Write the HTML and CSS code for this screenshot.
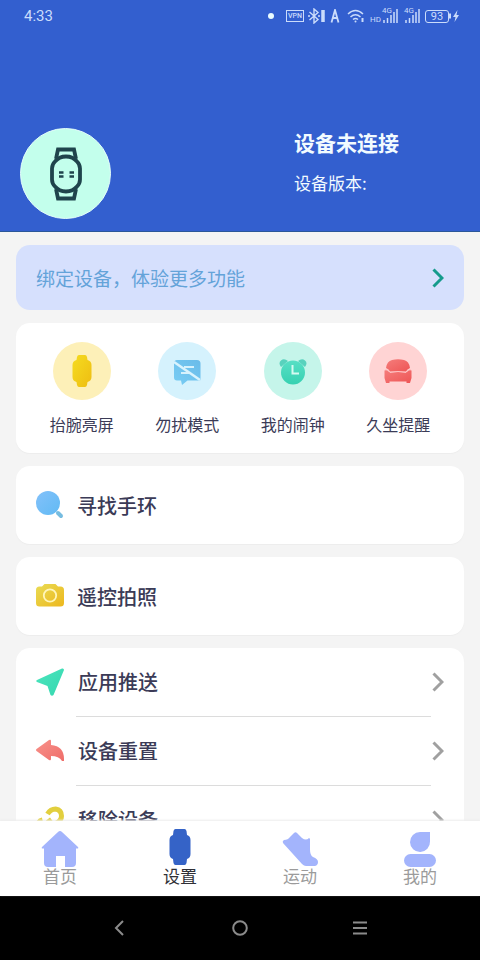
FILE: index.html
```html
<!DOCTYPE html>
<html lang="zh-CN">
<head>
<meta charset="utf-8">
<meta name="viewport" content="width=device-width, initial-scale=1">
<title>设置</title>
<link rel="stylesheet" href="styles.css">
</head>
<body>
<header class="hero">
  <div class="status">
    <time class="clock">4:33</time>
    <span class="dot"></span>
    <span class="vpn">VPN</span>
    <svg class="st-bt" width="18" height="16" viewBox="0 0 18 16" fill="none" stroke="currentColor" stroke-width="1.4"><path d="M1.500 4l8.500 7.500L6 15V1l4 3.500L1.500 12M0 8h2M10 8h2"/><path d="M15 2v12" stroke-width="3.500"/></svg>
    <svg class="st-a" width="10" height="14" viewBox="0 0 10 14" fill="none" stroke="currentColor" stroke-width="1.800"><path d="M1.500 13.500L5 1l3.500 12.500M3 9h4"/></svg>
    <svg class="st-wifi" width="18" height="14" viewBox="0 0 18 14" fill="none" stroke="currentColor" stroke-width="1.500"><path d="M1 5q7.500-7 15 0M3.500 8q5-4.500 10 0M6 10.500q2.500-2 5 0"/><circle cx="8.500" cy="12.500" r="1" fill="currentColor" stroke="none"/><path d="M15.500 9v4" stroke-width="2"/></svg>
    <span class="hd">HD</span>
    <span class="signal"><span class="gen">4G</span><svg width="16" height="16" viewBox="0 0 16 16" fill="none" stroke="currentColor" stroke-width="1.500"><path d="M2 15v-3M5.500 15v-5M9 15V7M12 15V4M15 15V1"/></svg></span>
    <span class="signal"><span class="gen">4G</span><svg width="16" height="16" viewBox="0 0 16 16" fill="none" stroke="currentColor" stroke-width="1.500"><path d="M2 15v-3M5.500 15v-5M9 15V7M12 15V4M15 15V1"/></svg></span>
    <span class="battery">93</span>
    <svg class="st-bolt" width="11" height="12" viewBox="0 0 11 12" fill="currentColor"><path d="M0 3.500h2v5H0zM8.500 0L4 7h2.500L5.500 12 10 5H7.500z"/></svg>
  </div>
  <div class="device">
    <div class="avatar">
      <svg width="34" height="54" viewBox="0 0 34 54" fill="none" stroke="#1f444c" stroke-width="3.800"><path d="M7 12L9 2.500h16l2 9.500M7 42l2 9.500h16l2-9.500"/><path d="M17 9.500q7 0 11 5 3 3 3 7v11q0 4-3 7-4 5-11 5t-11-5q-3-3-3-7v-11q0-4 3-7 4-5 11-5z"/><path d="M10 25.500h4.500M20.500 25.500H25M10 29.500h4.500M20.500 29.500H25" stroke-width="2.600"/></svg>
    </div>
    <div class="device-text">
      <h1>设备未连接</h1>
      <p>设备版本:</p>
    </div>
  </div>
</header>

<main class="content">
  <a class="banner" href="#bind">
    <span>绑定设备，体验更多功能</span>
    <svg width="12" height="20" viewBox="0 0 12 20" fill="none" stroke="#159b8c" stroke-width="3"><path d="M1.500 1.500L10 10l-8.500 8.500"/></svg>
  </a>

  <section class="card quick">
    <a href="#raise"><span class="disc yellow"><svg width="34" height="34" viewBox="0 0 34 34"><defs><linearGradient id="gy" x1="0" y1="0" x2="1" y2="1"><stop offset="0" stop-color="#f5dc20"/><stop offset="1" stop-color="#eebd12"/></linearGradient></defs><path fill="url(#gy)" d="M14 1h6q1.500 0 2 2l.500 3q4 1 4 5v12q0 4-4 5l-.5 3q-.5 2-2 2h-6q-1.500 0-2-2l-.5-3q-4-1-4-5V11q0-4 4-5L12 3q.5-2 2-2z"/></svg></span>抬腕亮屏</a>
    <a href="#dnd"><span class="disc blue"><svg width="34" height="34" viewBox="0 0 34 34"><defs><linearGradient id="gb" x1="0" y1="1" x2="1" y2="0"><stop offset="0" stop-color="#78cdf4"/><stop offset="1" stop-color="#6abbe9"/></linearGradient></defs><path fill="url(#gb)" d="M7 6h20q3.500 0 3.500 3.500v16q0 1-1 1H17.500L12 31l-1-4.500H7q-3 0-3-3v-14Q4 6 7 6z"/><path d="M14 13h10M11 19h8" stroke="#d6f1fc" stroke-width="2"/><path d="M4 8l26 18" stroke="#d9f3fd" stroke-width="2.500"/></svg></span>勿扰模式</a>
    <a href="#alarm"><span class="disc green"><svg width="34" height="34" viewBox="0 0 34 34"><defs><linearGradient id="gg" x1="0" y1="0" x2="0" y2="1"><stop offset="0" stop-color="#58dfc5"/><stop offset="1" stop-color="#36d1b1"/></linearGradient></defs><path fill="#58d2bd" d="M5 13Q2 9 5 6.500T12 7zM29 13q3-4 0-6.500T22 7z"/><circle cx="17" cy="18.500" r="12" fill="url(#gg)"/><path d="M16.500 11v8.500H23" fill="none" stroke="#d5faf1" stroke-width="2"/></svg></span>我的闹钟</a>
    <a href="#sedentary"><span class="disc red"><svg width="34" height="34" viewBox="0 0 34 34"><defs><linearGradient id="gr" x1="0" y1="0" x2="1" y2="1"><stop offset="0" stop-color="#f57d7b"/><stop offset="1" stop-color="#ee5555"/></linearGradient></defs><path fill="url(#gr)" d="M11 6q6-1.500 12 0 5 1 6 8-3 1-4 3.500H9Q8 15 5 14q1-7 6-8z"/><path fill="url(#gr)" d="M3.500 16.500q3-1.500 4.500 1.500h18q1.500-3 4.500-1.500V24L29 29h-3.500v-1.500h-17V29H5l-1.500-5z"/><path d="M4 15.500q4 0 5 3 8-2 16 0 1-3 5-3" fill="none" stroke="#ffc3c3"/></svg></span>久坐提醒</a>
  </section>

  <a class="card single" href="#find">
    <svg width="28" height="28" viewBox="0 0 28 28"><defs><linearGradient id="gs" x1="0" y1="0" x2="1" y2="1"><stop offset="0" stop-color="#83c1fa"/><stop offset="1" stop-color="#61baf4"/></linearGradient></defs><circle cx="12" cy="12" r="12" fill="url(#gs)"/><path d="M22 22l3 3" stroke="#76bce0" stroke-width="4" stroke-linecap="round"/></svg>
    <span>寻找手环</span>
  </a>

  <a class="card single" href="#camera">
    <svg width="28" height="28" viewBox="0 0 28 28"><defs><linearGradient id="gc" x1="0" y1="0" x2="1" y2="1"><stop offset="0" stop-color="#e9dc55"/><stop offset="1" stop-color="#edb71d"/></linearGradient></defs><path fill="url(#gc)" d="M3.500 4.500H6L8.500 2h11L22 4.500h2.500Q28 4.500 28 8v13q0 3.500-3.500 3.500h-21Q0 24.500 0 21V8q0-3.500 3.500-3.500z"/><circle cx="14" cy="13.500" r="6.200" fill="none" stroke="#fff6ba" stroke-width="1.800"/></svg>
    <span>遥控拍照</span>
  </a>

  <nav class="card list">
    <a href="#push">
      <svg width="28" height="28" viewBox="0 0 28 28"><defs><linearGradient id="gp" x1="0" y1="0" x2="1" y2="1"><stop offset="0" stop-color="#4ce5bd"/><stop offset="1" stop-color="#35d7b0"/></linearGradient></defs><path fill="url(#gp)" d="M1 12L26 .5q2-.5 2 1.500L17.500 27q-1.500 1.500-3 0L11.500 18 1 14q-1.500-1 0-2z"/></svg>
      <span class="name">应用推送</span>
      <svg class="more" width="12" height="20" viewBox="0 0 12 20"><path d="M1.500 1.500L10 10l-8.500 8.500"/></svg>
    </a>
    <a href="#reset">
      <svg width="28" height="28" viewBox="0 0 28 28"><defs><linearGradient id="gx" x1="0" y1="0" x2="1" y2="1"><stop offset="0" stop-color="#f8928b"/><stop offset="1" stop-color="#ef6d69"/></linearGradient></defs><path fill="url(#gx)" d="M.5 12L13 3q2-1 2 1v4q13 1 13 14v2h-2q-3-5-11-5v3q0 2-2 1L.5 14q-1-1 0-2z"/></svg>
      <span class="name">设备重置</span>
      <svg class="more" width="12" height="20" viewBox="0 0 12 20"><path d="M1.500 1.500L10 10l-8.500 8.500"/></svg>
    </a>
    <a href="#remove">
      <svg width="28" height="28" viewBox="0 0 28 28" fill="none" stroke="#e2cf3e" stroke-width="5"><path d="M11.500 8q3-5 8-5 6 1 6 7 0 5-7 8-3 1-5-1"/><path d="M16.500 20q-3 5-8 5-6-1-6-7 0-3 4-4"/><path d="M11.500 16.500l4-3"/></svg>
      <span class="name">移除设备</span>
      <svg class="more" width="12" height="20" viewBox="0 0 12 20"><path d="M1.500 1.500L10 10l-8.500 8.500"/></svg>
    </a>
  </nav>
</main>

<nav class="tabs">
  <a href="#home"><svg width="38" height="38" viewBox="0 0 38 38"><path d="M19 2q1 0 2 1l16 15q1 1.500-1 1.500h-1V34q0 4-4 4h-7V27h-9v11H7q-4 0-4-4V19.500H2q-2 0-1-1.500L17 3q1-1 2-1z"/></svg>首页</a>
  <a class="active" href="#settings" aria-current="page"><svg width="38" height="38" viewBox="0 0 38 38"><path d="M14.500 0h9q1.500 0 2 2l.5 4q3.500 1 3.500 5v14q0 4-3.500 5l-.5 4q-.5 2-2 2h-9q-1.500 0-2-2l-.5-4q-3.500-1-3.500-5V11q0-4 3.500-5l.5-4q.5-2 2-2z"/></svg>设置</a>
  <a href="#sport"><svg width="38" height="38" viewBox="0 0 38 38"><path d="M13 4q1.500-1.500 3 0L21 9q4 3 7 0 1 0 1 1.500v10q0 6 3 7.500 5 2 5 5t-3 4H25q-2 0-4-2L2 14q-1-2 1-3 4 0 6-3z"/></svg>运动</a>
  <a href="#me"><svg width="38" height="38" viewBox="0 0 38 38"><path d="M19 3h10v9.500A10 10 0 1 1 19 3z"/><rect x="3" y="25" width="32" height="13" rx="6.500"/></svg>我的</a>
</nav>

<footer class="system">
  <button aria-label="返回"><svg width="16" height="16" viewBox="0 0 16 16"><path d="M11 1L4 8l7 7"/></svg></button>
  <button aria-label="主屏幕"><svg width="16" height="16" viewBox="0 0 16 16"><circle cx="8" cy="8" r="6.800"/></svg></button>
  <button aria-label="菜单"><svg width="16" height="16" viewBox="0 0 16 16"><path d="M1 2.500h14M1 8h14M1 13.500h14"/></svg></button>
</footer>
</body>
</html>
```
FILE: styles.css
```css
* {
  box-sizing: border-box;
}

body {
  margin: 0;
  height: 100vh;
  display: flex;
  flex-direction: column;
  overflow: hidden;
  background: #f4f4f4;
  color: #3b3b57;
  font-family: "Noto Sans CJK SC", sans-serif;
}

a {
  color: inherit;
  text-decoration: none;
}

svg {
  display: block;
  flex: none;
}

.hero {
  flex: none;
  background: #335fcf;
  border-bottom: 1px solid #2b5799;
  color: #f2fbff;
}

.status {
  height: 32px;
  padding: 0 20px 0 24px;
  display: flex;
  align-items: center;
  color: #cbdcfb;
  font-family: Roboto, sans-serif;
}

.clock {
  margin-right: auto;
  font-size: 15px;
}

.dot {
  width: 6px;
  height: 6px;
  margin-right: 12px;
  border-radius: 50%;
  background: #e9fbff;
}

.vpn {
  width: 18px;
  height: 12px;
  margin-right: 4px;
  border: 1px solid currentColor;
  font-size: 7px;
  font-weight: 500;
  line-height: 10px;
  text-align: center;
}

.st-bt {
  margin-right: 4px;
}

.st-a {
  margin-right: 7px;
}

.st-wifi {
  margin-right: 5px;
}

.hd {
  padding-top: 8px;
  font-size: 8px;
  line-height: 8px;
}

.signal {
  position: relative;
  padding-left: 1px;
  margin-right: 5px;
}

.gen {
  position: absolute;
  top: -1px;
  left: 1px;
  font-size: 8px;
  line-height: 8px;
}

.battery {
  width: 24px;
  height: 13px;
  border: 1px solid currentColor;
  border-radius: 3px;
  font-size: 11px;
  line-height: 11px;
  text-align: center;
}

.device {
  padding: 96px 81px 12px 20px;
  display: flex;
  justify-content: space-between;
}

.avatar {
  width: 91px;
  height: 91px;
  display: flex;
  align-items: center;
  justify-content: center;
  border-radius: 50%;
  border: 1px solid #e4fdfb;
  background: #c3ffec;
}

h1,
p {
  margin: 0;
}

h1 {
  font-size: 21px;
  line-height: 28px;
  font-weight: 700;
}

p {
  margin-top: 15px;
  font-size: 17px;
  line-height: 24px;
}

.content {
  flex: 1;
  min-height: 0;
  padding: 13px 16px 0;
  display: flex;
  flex-direction: column;
  gap: 13px;
  overflow: hidden;
}

.banner,
.card {
  flex: none;
  border-radius: 14px;
}

.banner {
  height: 65px;
  padding: 0 20px;
  display: flex;
  align-items: center;
  justify-content: space-between;
  background: #d6e0fd;
  color: #64a3d9;
  font-size: 19px;
}

.card {
  background: #fff;
  box-shadow: 0 1px 1px #ededed;
}

.quick {
  height: 130px;
  padding: 19px 13px 0;
  display: grid;
  grid-template-columns: repeat(4, 1fr);
}

.quick a {
  display: flex;
  flex-direction: column;
  align-items: center;
  gap: 12px;
  font-size: 16px;
  line-height: 24px;
}

.disc {
  width: 58px;
  height: 58px;
  display: flex;
  align-items: center;
  justify-content: center;
  border-radius: 50%;
}

.yellow {
  background: #fdf0b8;
}

.blue {
  background: #d5f2fd;
}

.green {
  background: #c5f5ea;
}

.red {
  background: #ffd4d4;
}

.single {
  height: 78px;
  padding: 0 20px;
  display: flex;
  align-items: center;
  gap: 13px;
  font-size: 20px;
  font-weight: 500;
}

.list a {
  position: relative;
  height: 69px;
  padding: 0 20px 2px;
  display: flex;
  align-items: center;
  gap: 14px;
  font-size: 20px;
  font-weight: 500;
}

.list a + a::before {
  content: "";
  position: absolute;
  top: -1px;
  left: 60px;
  right: 33px;
  height: 1px;
  background: #dcdcdc;
}

.more {
  margin-left: auto;
  fill: none;
  stroke: #a0a0a0;
  stroke-width: 3;
}

.tabs {
  flex: none;
  height: 75px;
  padding-top: 8px;
  display: grid;
  grid-template-columns: repeat(4, 1fr);
  background: #fff;
  box-shadow: 0 -1px 2px #ececec;
  z-index: 1;
}

.tabs a {
  display: flex;
  flex-direction: column;
  align-items: center;
  color: #9b9b9b;
  font-size: 17px;
  line-height: 18px;
}

.tabs svg {
  fill: #a3b4fc;
}

.tabs .active {
  color: #303036;
}

.tabs .active svg {
  fill: #3563c7;
}

.system {
  flex: none;
  height: 64px;
  padding: 0 60px;
  display: grid;
  grid-template-columns: repeat(3, 1fr);
  background: #000;
}

.system button {
  padding: 0;
  display: flex;
  align-items: center;
  justify-content: center;
  border: 0;
  background: none;
}

.system svg {
  fill: none;
  stroke: #8b8b8b;
  stroke-width: 2;
}
```
